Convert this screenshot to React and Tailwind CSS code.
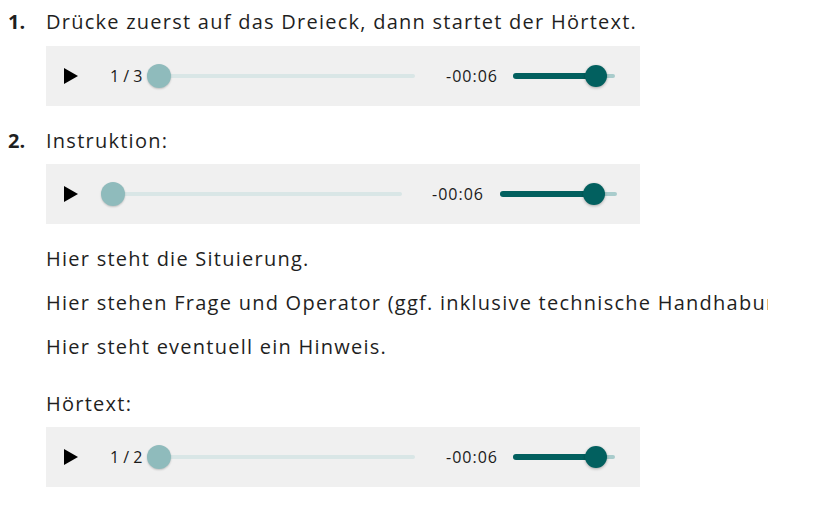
import React from 'react';

function PlayIcon() {
  return (
    <svg width="14" height="16" viewBox="0 0 14 16" className="shrink-0">
      <path d="M0 0 L14 8 L0 16 Z" fill="#000" />
    </svg>
  );
}

function Player({ label, progressGap, progressW, timeGap, volGap, volW, volPos }) {
  return (
    <div className="flex h-[60px] w-[594px] items-center bg-[#f0f0f0] pl-[18px] font-['Open_Sans',sans-serif] text-[16px] tracking-normal text-[#1a1a1a]">
      <PlayIcon />
      {label && <span className="ml-[32px] w-[32px] whitespace-nowrap leading-none">{label}</span>}
      <div className="relative h-[24px] shrink-0" style={{ width: progressW, marginLeft: progressGap }}>
        <div className="absolute left-[12px] right-0 top-[10px] h-[4px] rounded-full bg-[#d9e6e6]" />
        <div className="absolute left-0 top-0 h-[24px] w-[24px] rounded-full bg-[#8fbbbc] shadow-[0_1px_2px_rgba(0,0,0,0.2)]" />
      </div>
      <span className="w-[52px] whitespace-nowrap leading-none tracking-[1px]" style={{ marginLeft: timeGap }}>
        -00:06
      </span>
      <div className="relative h-[24px] shrink-0" style={{ width: volW, marginLeft: volGap }}>
        <div className="absolute left-0 right-0 top-[10px] h-[4px] rounded-full bg-[#a9cccc]" />
        <div className="absolute left-0 top-[9px] h-[6px] rounded-full bg-[#02605f]" style={{ width: volPos }} />
        <div
          className="absolute top-[1px] h-[22px] w-[22px] rounded-full bg-[#02605f] shadow-[0_1px_3px_rgba(0,0,0,0.3)]"
          style={{ left: volPos - 11 }}
        />
      </div>
    </div>
  );
}

export default function App() {
  return (
    <div className="min-h-[525px] w-[825px] bg-white pt-[8px] font-['Open_Sans',sans-serif] text-[20px] leading-[28px] tracking-[1.25px] text-[#1f1f1f]">
      <div className="flex">
        <span className="w-[46px] shrink-0 pl-[8px] font-bold tracking-normal">1.</span>
        <span className="whitespace-nowrap">Drücke zuerst auf das Dreieck, dann startet der Hörtext.</span>
      </div>
      <div className="ml-[46px] mt-[10px]">
        <Player label="1 / 3" progressGap={5} progressW={268} timeGap={31} volGap={15} volW={102} volPos={83} />
      </div>

      <div className="mt-[21px] flex">
        <span className="w-[46px] shrink-0 pl-[8px] font-bold tracking-normal">2.</span>
        <span>Instruktion:</span>
      </div>
      <div className="ml-[46px] mt-[9px]">
        <Player progressGap={23} progressW={301} timeGap={30} volGap={16} volW={117} volPos={94} />
      </div>

      <div className="ml-[46px] w-[722px]">
        <p className="mt-[21px]">Hier steht die Situierung.</p>
        <p className="mt-[16px] overflow-hidden whitespace-nowrap">
          Hier stehen Frage und Operator (ggf. inklusive technische Handhabung)
        </p>
        <p className="mt-[16px]">Hier steht eventuell ein Hinweis.</p>
        <p className="mt-[29px]">Hörtext:</p>
        <div className="mt-[9px]">
          <Player label="1 / 2" progressGap={5} progressW={268} timeGap={31} volGap={15} volW={102} volPos={83} />
        </div>
      </div>
    </div>
  );
}
